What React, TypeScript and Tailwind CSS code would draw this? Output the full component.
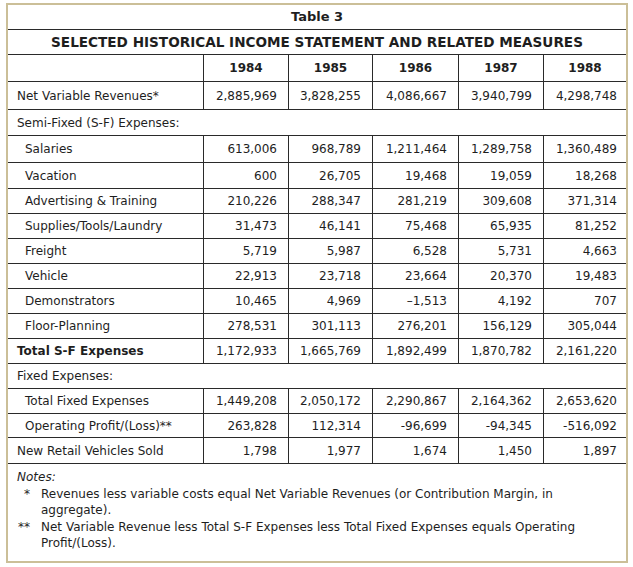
import React from "react";

// Table 3 — historical income statement, rendered as a bordered grid.

type Row =
  | { kind: "data"; label: string; values: string[]; indent?: boolean; bold?: boolean; h: string }
  | { kind: "section"; label: string; h: string };

const ROWS: Row[] = [
  { kind: "data", label: "Net Variable Revenues*", values: ["2,885,969", "3,828,255", "4,086,667", "3,940,799", "4,298,748"], h: "h-[28px]" },
  { kind: "section", label: "Semi-Fixed (S-F) Expenses:", h: "h-[26px]" },
  { kind: "data", label: "Salaries", indent: true, values: ["613,006", "968,789", "1,211,464", "1,289,758", "1,360,489"], h: "h-[27px]" },
  { kind: "data", label: "Vacation", indent: true, values: ["600", "26,705", "19,468", "19,059", "18,268"], h: "h-[26px]" },
  { kind: "data", label: "Advertising & Training", indent: true, values: ["210,226", "288,347", "281,219", "309,608", "371,314"], h: "h-[25px]" },
  { kind: "data", label: "Supplies/Tools/Laundry", indent: true, values: ["31,473", "46,141", "75,468", "65,935", "81,252"], h: "h-[25px]" },
  { kind: "data", label: "Freight", indent: true, values: ["5,719", "5,987", "6,528", "5,731", "4,663"], h: "h-[25px]" },
  { kind: "data", label: "Vehicle", indent: true, values: ["22,913", "23,718", "23,664", "20,370", "19,483"], h: "h-[25px]" },
  { kind: "data", label: "Demonstrators", indent: true, values: ["10,465", "4,969", "–1,513", "4,192", "707"], h: "h-[25px]" },
  { kind: "data", label: "Floor-Planning", indent: true, values: ["278,531", "301,113", "276,201", "156,129", "305,044"], h: "h-[25px]" },
  { kind: "data", label: "Total S-F Expenses", bold: true, values: ["1,172,933", "1,665,769", "1,892,499", "1,870,782", "2,161,220"], h: "h-[25px]" },
  { kind: "section", label: "Fixed Expenses:", h: "h-[25px]" },
  { kind: "data", label: "Total Fixed Expenses", indent: true, values: ["1,449,208", "2,050,172", "2,290,867", "2,164,362", "2,653,620"], h: "h-[25px]" },
  { kind: "data", label: "Operating Profit/(Loss)**", indent: true, values: ["263,828", "112,314", "-96,699", "-94,345", "-516,092"], h: "h-[24px]" },
  { kind: "data", label: "New Retail Vehicles Sold", values: ["1,798", "1,977", "1,674", "1,450", "1,897"], h: "h-[26px]" },
];

const YEARS = ["1984", "1985", "1986", "1987", "1988"];
const GRID = "grid grid-cols-[196px_85px_84px_86px_85px_82px] border-b border-[#2a2a2a]";

function DataRow({ row }: { row: Extract<Row, { kind: "data" }> }) {
  return (
    <div className={`${GRID} ${row.h}`}>
      <div
        className={`flex items-center border-r border-[#2a2a2a] ${row.indent ? "pl-[17px]" : "pl-[9px]"} ${row.bold ? "font-bold" : ""}`}
      >
        {row.label}
      </div>
      {row.values.map((v, i) => (
        <div
          key={i}
          className={`flex items-center justify-end ${i < 4 ? "border-r border-[#2a2a2a] pr-[11px]" : "pr-[9px]"}`}
        >
          {v}
        </div>
      ))}
    </div>
  );
}

export default function App() {
  return (
    <div className="min-h-[567px] bg-white pl-[6px] pt-[3px] font-['DejaVu_Sans',Verdana,sans-serif] text-[12px] text-[#1e1e1e]">
      <div className="flex h-[560px] w-[622px] flex-col border-2 border-[#cbbf98]">
        <div className="flex h-[25px] items-center justify-center border-b border-[#2a2a2a] text-[13px] font-bold">
          Table 3
        </div>
        <div className="flex h-[25px] items-center justify-center border-b border-[#2a2a2a] text-[13.6px] font-bold">
          SELECTED HISTORICAL INCOME STATEMENT AND RELATED MEASURES
        </div>
        <div className={`${GRID} h-[27px] font-bold`}>
          <div className="border-r border-[#2a2a2a]" />
          {YEARS.map((y, i) => (
            <div
              key={y}
              className={`flex items-center justify-center ${i < 4 ? "border-r border-[#2a2a2a]" : ""}`}
            >
              {y}
            </div>
          ))}
        </div>
        {ROWS.map((r) =>
          r.kind === "section" ? (
            <div key={r.label} className={`flex items-center border-b border-[#2a2a2a] pl-[9px] ${r.h}`}>
              {r.label}
            </div>
          ) : (
            <DataRow key={r.label} row={r} />
          )
        )}
        <div className="flex flex-col pl-[9px] pr-3 pt-[5px] leading-[16px]">
          <div className="italic">Notes:</div>
          <div className="mt-[1px] flex">
            <span className="w-[24px] shrink-0 pl-[7px]">*</span>
            <span>
              Revenues less variable costs equal Net Variable Revenues (or Contribution Margin, in aggregate).
            </span>
          </div>
          <div className="mt-[1px] flex">
            <span className="w-[24px] shrink-0 pl-[1px]">**</span>
            <span>
              Net Variable Revenue less Total S-F Expenses less Total Fixed Expenses equals Operating Profit/(Loss).
            </span>
          </div>
        </div>
      </div>
    </div>
  );
}
